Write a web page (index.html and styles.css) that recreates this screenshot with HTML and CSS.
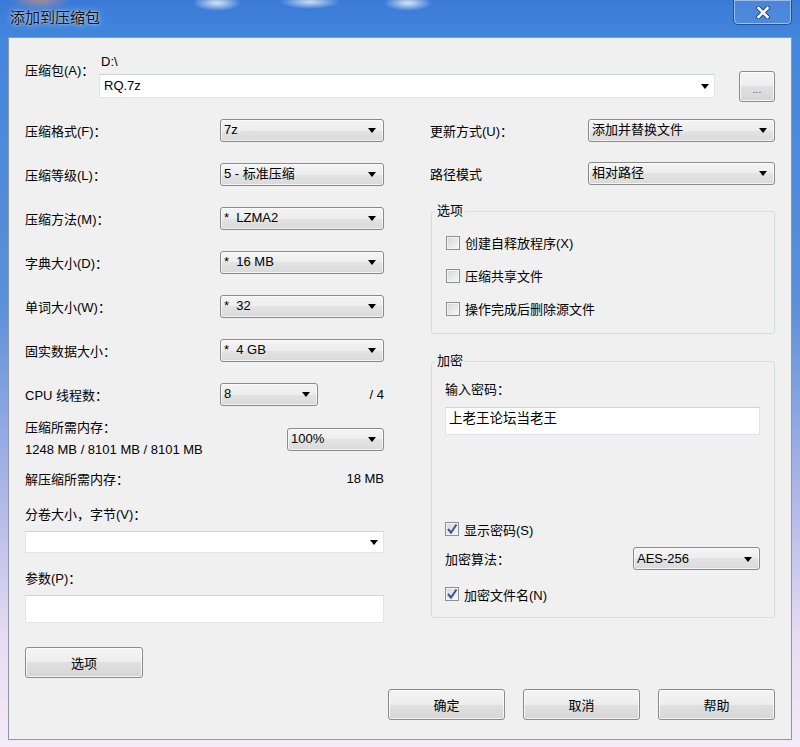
FILE: index.html
```html
<!DOCTYPE html>
<html lang="zh-CN">
<head>
    <meta charset="UTF-8">
    <title>添加到压缩包</title>
    <link rel="stylesheet" href="styles.css">
</head>
<body>

<div class="window">
    <div class="titlebar">
        <span class="title">添加到压缩包</span>
        <button class="close">
            <svg width="14" height="13" viewBox="0 0 14 13">
                <path d="M2.5 2 L11.5 11 M11.5 2 L2.5 11" stroke="#1d3f73" stroke-width="4.4" stroke-linecap="square"/>
                <path d="M2.5 2 L11.5 11 M11.5 2 L2.5 11" stroke="#fff" stroke-width="2.6" stroke-linecap="square"/>
            </svg>
        </button>
    </div>

    <div class="client">
        <div class="archive">
            <label class="archive-label">压缩包(A)：</label>
            <div class="archive-path">
                <div class="path">D:\</div>
                <div class="combo edit"><span class="value">RQ.7z</span><i class="arrow"></i></div>
            </div>
            <button class="btn browse">...</button>
        </div>

        <div class="columns">
            <div class="col">
                <div class="row"><span class="label">压缩格式(F)：</span><div class="combo"><span class="value">7z</span><i class="arrow"></i></div></div>
                <div class="row"><span class="label">压缩等级(L)：</span><div class="combo"><span class="value">5 - 标准压缩</span><i class="arrow"></i></div></div>
                <div class="row"><span class="label">压缩方法(M)：</span><div class="combo"><span class="value">*  LZMA2</span><i class="arrow"></i></div></div>
                <div class="row"><span class="label">字典大小(D)：</span><div class="combo"><span class="value">*  16 MB</span><i class="arrow"></i></div></div>
                <div class="row"><span class="label">单词大小(W)：</span><div class="combo"><span class="value">*  32</span><i class="arrow"></i></div></div>
                <div class="row"><span class="label">固实数据大小：</span><div class="combo"><span class="value">*  4 GB</span><i class="arrow"></i></div></div>
                <div class="row cpu-row"><span class="label">CPU 线程数：</span><div class="combo small"><span class="value">8</span><i class="arrow"></i></div><span class="num">/ 4</span></div>

                <div class="row mem-row">
                    <div class="label">
                        <div>压缩所需内存：</div>
                        <div>1248 MB / 8101 MB / 8101 MB</div>
                    </div>
                    <div class="combo mem"><span class="value">100%</span><i class="arrow"></i></div>
                </div>
                <div class="row unpack-row"><span class="label">解压缩所需内存：</span><span class="num">18 MB</span></div>

                <div class="field-label split-label">分卷大小，字节(V)：</div>
                <div class="combo edit split"><span class="value"></span><i class="arrow"></i></div>

                <div class="field-label params-label">参数(P)：</div>
                <div class="text-input params"></div>

                <button class="btn options">选项</button>
            </div>

            <div class="col">
                <div class="row"><span class="label">更新方式(U)：</span><div class="combo wide"><span class="value">添加并替换文件</span><i class="arrow"></i></div></div>
                <div class="row row-short"><span class="label">路径模式</span><div class="combo wide"><span class="value">相对路径</span><i class="arrow"></i></div></div>

                <fieldset class="group group-options">
                    <legend>选项</legend>
                    <div class="group-body">
                        <div class="check"><i class="box"></i>创建自释放程序(X)</div>
                        <div class="check"><i class="box"></i>压缩共享文件</div>
                        <div class="check"><i class="box"></i>操作完成后删除源文件</div>
                    </div>
                </fieldset>

                <fieldset class="group group-crypt">
                    <legend>加密</legend>
                    <div class="group-body">
                        <div class="field-label pass-label">输入密码：</div>
                        <div class="text-input password">上老王论坛当老王</div>
                        <div class="check show-pass"><i class="box checked"><svg width="14" height="14" viewBox="0 0 14 14"><path d="M3 7 L6 10.5 L11.5 2.5" stroke="#3b5394" stroke-width="2" fill="none"/></svg></i>显示密码(S)</div>
                        <div class="row algo-row"><span class="label">加密算法：</span><div class="combo algo"><span class="value">AES-256</span><i class="arrow"></i></div></div>
                        <div class="check crypt-names"><i class="box checked"><svg width="14" height="14" viewBox="0 0 14 14"><path d="M3 7 L6 10.5 L11.5 2.5" stroke="#3b5394" stroke-width="2" fill="none"/></svg></i>加密文件名(N)</div>
                    </div>
                </fieldset>
            </div>
        </div>

        <div class="footer">
            <button class="btn action">确定</button>
            <button class="btn action">取消</button>
            <button class="btn action">帮助</button>
        </div>
    </div>
</div>

</body>
</html>
```

FILE: styles.css
```css
body {
    margin: 0;
    font: 13px "Liberation Sans", "Noto Sans CJK SC", sans-serif;
    color: #000;
}

.window {
    width: 800px;
    height: 747px;
    display: flex;
    flex-direction: column;
    overflow: hidden;
    background:
        radial-gradient(ellipse 24px 8px at 217px 3px, rgba(255, 255, 255, .8), rgba(255, 255, 255, 0)),
        radial-gradient(ellipse 30px 7px at 310px 2px, rgba(255, 255, 255, .75), rgba(255, 255, 255, 0)),
        radial-gradient(ellipse 24px 8px at 408px 3px, rgba(255, 255, 255, .8), rgba(255, 255, 255, 0)),
        radial-gradient(ellipse 30px 10px at 40px 0, rgba(240, 150, 110, .6), rgba(240, 150, 110, 0)),
        linear-gradient(180deg, #3a7ad6 0, #4286dc 36px, #5a8fd9 300px, #a7b3e6 480px, #e8dcf3 640px, #f5eaf7 747px);
}

.titlebar {
    height: 37px;
    display: flex;
    align-items: flex-start;
    flex-shrink: 0;
}

.title {
    margin: 9px 0 0 10px;
    font-size: 15px;
    line-height: 18px;
    color: #111;
    text-shadow: 0 0 6px rgba(255, 255, 255, .7), 0 0 2px rgba(255, 255, 255, .6);
}

.close {
    margin: 0 8px 0 auto;
    width: 59px;
    height: 25px;
    padding: 0;
    display: flex;
    align-items: center;
    justify-content: center;
    border: 1px solid #1f4f8f;
    border-top: none;
    border-radius: 0 0 5px 5px;
    background: rgba(255, 255, 255, .08);
    box-shadow: inset 0 0 0 1px rgba(255, 255, 255, .45);
}

.client {
    flex: 1;
    margin: 0 8px 7px 8px;
    padding: 0 16px;
    background: #f0f0f0;
    border: 1px solid #8f99a5;
}

/* поля ввода и списки */
.combo {
    box-sizing: border-box;
    height: 23px;
    display: flex;
    align-items: center;
    padding: 0 7px 0 3px;
    border: 1px solid #8a8a8a;
    border-radius: 3px;
    background: linear-gradient(#f4f4f4, #ededed 50%, #e3e3e3 50%, #dadada);
    box-shadow: inset 0 0 0 1px rgba(255, 255, 255, .7);
}

.combo .value {
    flex: 1;
    white-space: pre;
    overflow: hidden;
    line-height: 18px;
}

.combo .arrow {
    width: 0;
    height: 0;
    border-left: 4.5px solid transparent;
    border-right: 4.5px solid transparent;
    border-top: 5px solid #000;
    margin-top: 1px;
}

.combo.edit {
    background: #fff;
    border: 1px solid #e1e4e8;
    border-top-color: #cfd4da;
    border-radius: 0;
    box-shadow: none;
    padding-left: 4px;
    padding-right: 5px;
}

.text-input {
    box-sizing: border-box;
    background: #fff;
    border: 1px solid #e1e4e8;
    border-top-color: #cfd4da;
}

.btn {
    box-sizing: border-box;
    padding: 0;
    font: 13px "Noto Sans CJK SC", sans-serif;
    color: #000;
    border: 1px solid #8a8a8a;
    border-radius: 3px;
    background: linear-gradient(#f4f4f4, #ededed 50%, #e0e0e0 50%, #d6d6d6);
    box-shadow: inset 0 0 0 1px rgba(255, 255, 255, .75);
}

/* верхняя строка */
.archive {
    display: flex;
    align-items: flex-start;
    padding-top: 16px;
}

.archive-label {
    width: 74px;
    margin-top: 9px;
    line-height: 16px;
}

.archive-path {
    width: 616px;
}

.path {
    line-height: 16px;
    padding-left: 2px;
    margin-bottom: 4px;
}

.archive-path .combo {
    height: 24px;
}

.browse {
    margin: 17px 0 0 24px;
    width: 36px;
    height: 31px;
    font-size: 10px;
    color: #555;
    padding-top: 3px;
}

/* колонки */
.columns {
    display: grid;
    grid-template-columns: 359px 345px;
    column-gap: 46px;
    margin-top: 6px;
}

.row {
    height: 44px;
    display: flex;
    align-items: center;
}

.row .label {
    flex: 1;
}

.row .combo {
    width: 164px;
}

.cpu-row .label {
    flex: 0 0 195px;
}

.row .combo.small {
    width: 98px;
}

.row .num {
    flex: 1;
    text-align: right;
}

.row .combo.wide {
    width: 187px;
}

.row-short {
    height: 42px;
}

.mem-row {
    height: 46px;
}

.mem-row .label {
    line-height: 22px;
}

.row .combo.mem {
    width: 97px;
}

.unpack-row {
    height: 32px;
}

.field-label {
    line-height: 20px;
}

.split-label {
    margin-top: 11px;
}

.combo.split {
    height: 22px;
    margin-top: 6px;
}

.params-label {
    margin-top: 16px;
}

.params {
    height: 28px;
    margin-top: 6px;
}

.options {
    margin-top: 24px;
    width: 118px;
    height: 31px;
}

/* группы */
.group {
    margin: 9px 0 0 1px;
    padding: 0 0 8px 3px;
    border: 1px solid #d5dbe0;
    border-radius: 3px;
    min-width: 0;
}

.group legend {
    padding: 0 2px;
    line-height: 16px;
}

.group-options .group-body {
    margin: 7px 0 0 11px;
}

.check {
    height: 33px;
    display: flex;
    align-items: center;
}

.check .box {
    box-sizing: border-box;
    width: 14px;
    height: 14px;
    margin-right: 5px;
    border: 1px solid #8e8f8f;
    background: linear-gradient(135deg, #d3d6da, #f8f8f8);
    box-shadow: inset 0 0 0 1px #f4f4f4;
    display: flex;
    align-items: center;
    justify-content: center;
}

.check .box svg {
    margin: -1px;
}

.group-crypt {
    margin-top: 19px;
    padding-bottom: 10px;
}

.group-crypt .group-body {
    margin: 0 14px 0 10px;
}

.pass-label {
    margin-top: 11px;
}

.password {
    height: 28px;
    margin-top: 7px;
    padding: 2px 3px;
    line-height: 18px;
    font-size: 13.5px;
}

.show-pass {
    height: 26px;
    margin-top: 81px;
}

.algo-row {
    height: 23px;
    margin-top: 5px;
}

.row .combo.algo {
    width: 127px;
}

.crypt-names {
    height: 26px;
    margin-top: 11px;
}

/* кнопки внизу */
.footer {
    display: flex;
    justify-content: flex-end;
    gap: 18px;
    margin-top: 11px;
}

.action {
    width: 117px;
    height: 31px;
}
```
